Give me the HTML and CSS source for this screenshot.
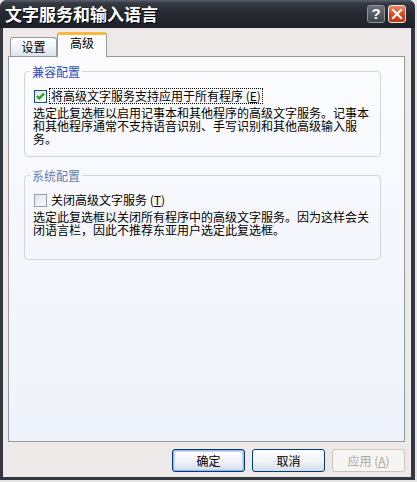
FILE: index.html
```html
<!DOCTYPE html>
<html lang="zh-CN">
<head>
<meta charset="utf-8">
<title>文字服务和输入语言</title>
<link rel="stylesheet" href="styles.css">
</head>
<body>
<div class="window">
  <div class="titlebar">
    <span class="title">文字服务和输入语言</span>
    <div class="tbtns">
      <span class="tb help">?</span>
      <span class="tb close"><svg width="16" height="16" viewBox="0 0 16 16"><path d="M4 4 L12 12 M12 4 L4 12" stroke="#fff" stroke-width="2.2" stroke-linecap="square"/></svg></span>
    </div>
  </div>
  <div class="client">
    <div class="tabs">
      <div class="tab">设置</div>
      <div class="tab active">高级</div>
    </div>
    <div class="panel">
      <fieldset class="group g1">
        <legend>兼容配置</legend>
        <div class="check">
          <svg class="cb" width="13" height="13" viewBox="0 0 13 13"><defs><linearGradient id="cbg" x1="0" y1="0" x2="1" y2="1"><stop offset="0" stop-color="#dcdcd7"/><stop offset="1" stop-color="#ffffff"/></linearGradient></defs><rect x="0.5" y="0.5" width="12" height="12" fill="url(#cbg)" stroke="#1c5180"/><path d="M3 6 L5.2 8.4 L10 3.6" fill="none" stroke="#21a121" stroke-width="2.2"/></svg>
          <span class="lbl focus">将高级文字服务支持应用于所有程序&nbsp;(<u>E</u>)</span>
        </div>
        <p class="desc">选定此复选框以启用记事本和其他程序的高级文字服务。记事本<br>和其他程序通常不支持语音识别、手写识别和其他高级输入服<br>务。</p>
      </fieldset>
      <fieldset class="group g2">
        <legend>系统配置</legend>
        <div class="check">
          <svg class="cb" width="13" height="13" viewBox="0 0 13 13"><defs><linearGradient id="cbg2" x1="0" y1="0" x2="1" y2="1"><stop offset="0" stop-color="#dfe3ea"/><stop offset="1" stop-color="#fbfbfd"/></linearGradient></defs><rect x="0.5" y="0.5" width="12" height="12" fill="url(#cbg2)" stroke="#8fa1ba"/></svg>
          <span class="lbl">关闭高级文字服务&nbsp;(<u>T</u>)</span>
        </div>
        <p class="desc">选定此复选框以关闭所有程序中的高级文字服务。因为这样会关<br>闭语言栏，因此不推荐东亚用户选定此复选框。</p>
      </fieldset>
    </div>
    <div class="buttons">
      <button class="btn default">确定</button>
      <button class="btn">取消</button>
      <button class="btn disabled">应用&nbsp;(<u>A</u>)</button>
    </div>
  </div>
</div>
</body>
</html>
```
FILE: styles.css
```css
* { box-sizing: border-box; }
body {
  margin: 0;
  background: #e6e6e6;
  font-family: "Noto Sans CJK SC", "Noto Sans", sans-serif;
  font-size: 12px;
  color: #000;
}
.window {
  width: 415px;
  height: 480px;
  background: #33373f;
  border-radius: 7px 7px 0 0;
  display: flex;
  flex-direction: column;
}
.titlebar {
  height: 28px;
  flex: none;
  display: flex;
  align-items: center;
  padding: 0 9px 0 5px;
  border-radius: 7px 7px 0 0;
  background: linear-gradient(#5b616c 0, #353a43 3px, #262a32 45%, #1e2128 100%);
}
.title {
  flex: 1;
  color: #fff;
  font-weight: bold;
  font-size: 17px;
  line-height: 20px;
  text-shadow: 1px 1px 0 #000;
}
.tbtns { display: flex; gap: 3px; }
.tb {
  width: 18px;
  height: 18px;
  border-radius: 3px;
  display: flex;
  align-items: center;
  justify-content: center;
}
.help {
  border: 1px solid #8d939c;
  background: linear-gradient(#6b717b, #41464e);
  color: #fff;
  font-family: "Liberation Sans", sans-serif;
  font-weight: bold;
  font-size: 15px;
  line-height: 16px;
}
.close {
  border: 1px solid #e8e8e8;
  background: linear-gradient(#f2835a, #d8461f 55%, #c2361a);
}
.client {
  flex: 1;
  margin: 0 4px 3px 3px;
  background: #ece9e8;
  padding: 5px 6px 4px 5px;
  display: flex;
  flex-direction: column;
}
.tabs {
  display: flex;
  align-items: flex-end;
  height: 24px;
  margin-bottom: -1px;
  padding-left: 2px;
  position: relative;
  z-index: 1;
}
.tab {
  width: 47px;
  height: 19px;
  margin-bottom: 1px;
  border: 1px solid #919b9c;
  border-bottom: none;
  border-radius: 3px 3px 0 0;
  background: linear-gradient(#ffffff, #f3f5f9 45%, #dbe2ef);
  text-align: center;
  line-height: 18px;
}
.tab.active {
  width: 50px;
  height: 25px;
  margin-bottom: 0;
  border-top: 3px solid #f9b940;
  background: #fcfcfe;
  line-height: 16px;
}
.panel {
  height: 386px;
  flex: none;
  border: 1px solid #919b9c;
  background: linear-gradient(#fcfcfe, #f5f7fc 45%, #eef2fa);
  padding: 8px 0 0 15px;
}
.group {
  width: 357px;
  margin: 0;
  padding: 0 8px;
  border: 1px solid #d3d5dc;
  border-radius: 4px;
}
.group legend {
  margin-left: -3px;
  padding: 0 2px;
  line-height: 13px;
  color: #1f4fc2;
}
.g1 { padding-bottom: 11px; }
.g2 { margin-top: 12px; padding-bottom: 23px; }
.g2 legend { color: #6480b6; }
.check {
  display: flex;
  align-items: center;
  height: 16px;
  margin-top: 10px;
  margin-left: 1px;
}
.cb { flex: none; }
.lbl {
  margin-left: 2px;
  padding: 0 1px;
  line-height: 14px;
  border: 1px solid transparent;
  white-space: nowrap;
}
.lbl.focus { border: 1px dotted #000; }
.desc {
  margin: 2px 0 0;
  line-height: 13px;
  white-space: nowrap;
}
.buttons {
  display: flex;
  justify-content: flex-end;
  gap: 7px;
  margin-top: 7px;
}
.btn {
  width: 73px;
  height: 23px;
  padding: 0;
  border: 1px solid #003c74;
  border-radius: 3px;
  background: linear-gradient(#ffffff, #f3f4f8 50%, #d5dcea);
  font-family: "Noto Sans CJK SC", "Noto Sans", sans-serif;
  font-size: 12px;
  line-height: 20px;
  color: #000;
}
.btn.default {
  box-shadow: inset 0 0 0 1px #9eb6ea, inset 0 0 0 2px #c6d6f6;
}
.btn.disabled {
  border-color: #c9c7ba;
  background: #f5f5f4;
  color: #aca899;
}
```
